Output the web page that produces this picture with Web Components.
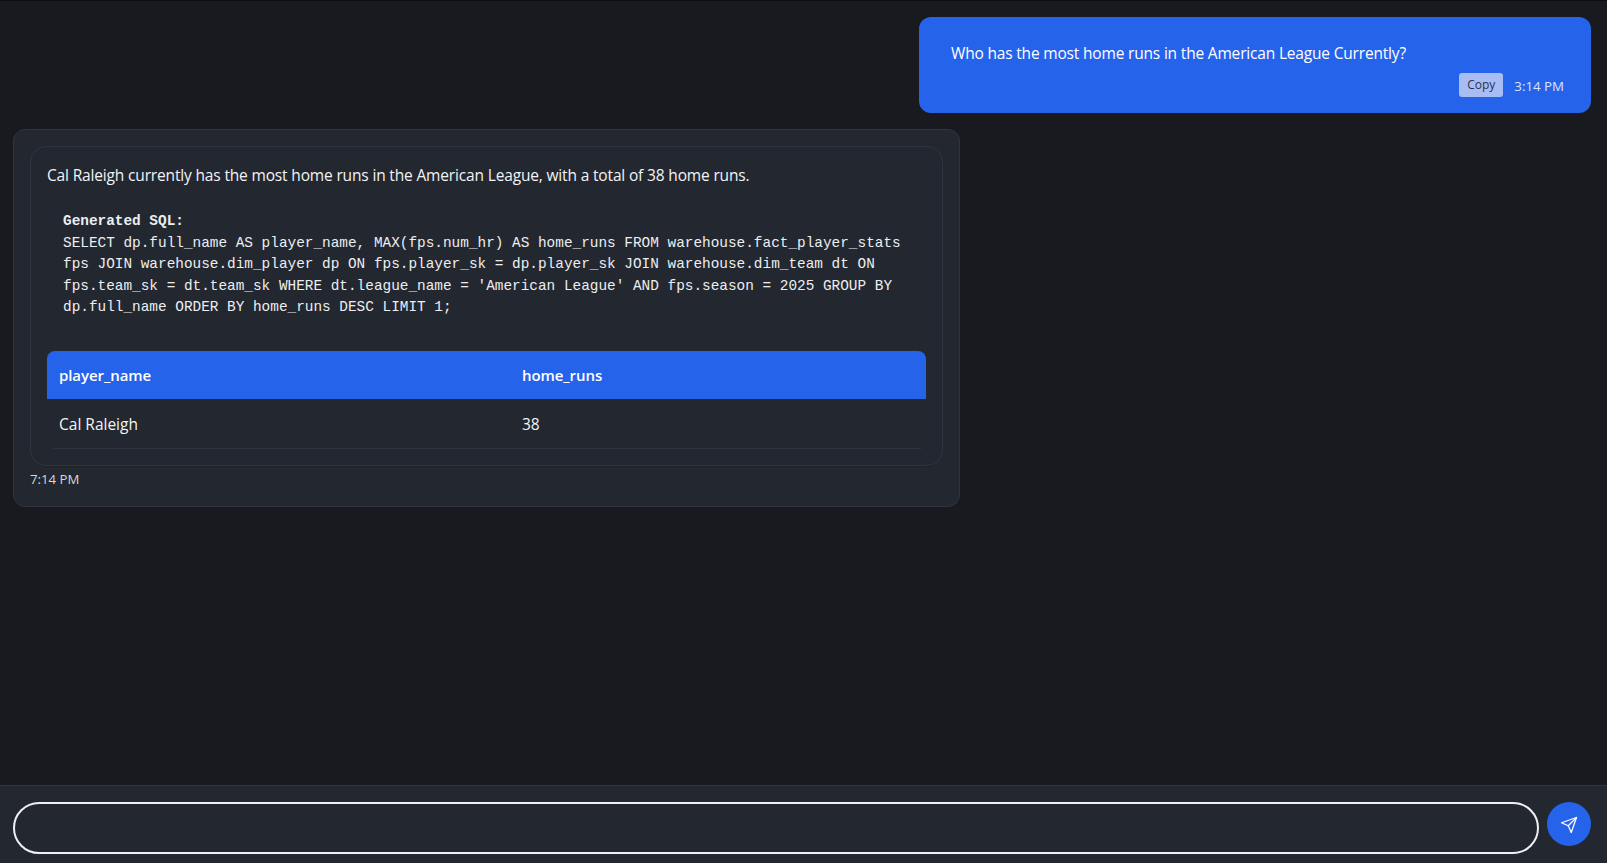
<!DOCTYPE html>
<html><head><meta charset="utf-8"><title>Chat</title>
<style>
html,body{margin:0;height:100%;background:#181a1f}
body{font-family:"Open Sans","Noto Sans",sans-serif;color:#f3f4f6;overflow:hidden}
</style></head><body>
<chat-app>
<user-bubble time="3:14 PM">Who has the most home runs in the American League Currently?</user-bubble>
<bot-card time="7:14 PM">
<div slot="answer">Cal Raleigh currently has the most home runs in the American League, with a total of 38 home runs.</div>
<sql-block>SELECT dp.full_name AS player_name, MAX(fps.num_hr) AS home_runs FROM warehouse.fact_player_stats fps JOIN warehouse.dim_player dp ON fps.player_sk = dp.player_sk JOIN warehouse.dim_team dt ON fps.team_sk = dt.team_sk WHERE dt.league_name = 'American League' AND fps.season = 2025 GROUP BY dp.full_name ORDER BY home_runs DESC LIMIT 1;</sql-block>
<result-table></result-table>
</bot-card>
<chat-input slot="footer"></chat-input>
</chat-app>
<script>
const def=(name,html,setup)=>customElements.define(name,class extends HTMLElement{
  constructor(){super();this.attachShadow({mode:'open'}).innerHTML=html;}
  connectedCallback(){setup&&setup(this,this.shadowRoot);}
});
const FONT='font-family:"Open Sans","Noto Sans",sans-serif;';
def('chat-app',`<style>
:host{display:flex;flex-direction:column;height:863px;box-sizing:border-box;border-top:1px solid #0b0c0f;background:#181a1f}
.log{flex:1;min-height:0;display:flex;flex-direction:column;align-items:stretch;gap:16px;padding:16px 16px 0 13px;overflow:hidden}
</style><div class="log"><slot></slot></div><slot name="footer"></slot>`);
def('user-bubble',`<style>
:host{display:block;align-self:flex-end;width:672px;height:96px;box-sizing:border-box;background:#2563eb;border-radius:12px;padding:26px 27px 0 32px;color:#fff;${FONT}font-size:15.5px;letter-spacing:-.18px;line-height:20px}
.meta{display:flex;justify-content:flex-end;align-items:center;gap:11px;margin-top:10px;font-size:13.3px;letter-spacing:0;color:#dbe5fb}
.meta span{position:relative;top:1px}
button{all:unset;font:inherit;font-size:12px;line-height:24px;height:24px;width:44px;text-align:center;background:#a9bdf5;border-radius:3px;color:#29334f}
</style><div><slot></slot></div><div class="meta"><button>Copy</button><span id="t"></span></div>`,
(el,s)=>{s.getElementById('t').textContent=el.getAttribute('time');});
def('bot-card',`<style>
:host{display:block;width:947px;box-sizing:border-box;background:#23272f;border:1px solid #2f343f;border-radius:12px;padding:16px 16px 17px;${FONT}font-size:15.5px;color:#f3f4f6}
.inner{border:1px solid #2f343f;border-radius:16px;padding:16px 16px 16px}
.answer{line-height:24px;height:24px;letter-spacing:-.16px}
.dots{height:0;border-top:1px dotted #191c21;margin:0 10px 0 15px}
.time{font-size:13.2px;line-height:20px;margin-top:2px;color:#d5d7dc}
</style><div class="inner"><div class="answer"><slot name="answer"></slot></div><slot></slot></div><div class="dots"></div><div class="time" id="t"></div>`,
(el,s)=>{s.getElementById('t').textContent=el.getAttribute('time');});
def('sql-block',`<style>
:host{display:block;margin:24px 0 32px;padding:0 16px;font-family:"Liberation Mono",monospace;font-size:14.4px;line-height:21.6px;color:#eceef1}
b{display:block}
</style><b>Generated SQL:</b><slot></slot>`);
def('result-table',`<style>
:host{display:block;font-size:15.5px}
.head,.row{display:grid;grid-template-columns:463px 1fr}
.head{height:48px;align-items:center;background:#2563eb;border-radius:8px 8px 0 0;color:#fff;font-weight:600;font-size:15px;letter-spacing:-.08px}
.row{height:49px;align-items:center;box-sizing:border-box;padding-top:1px}
span{padding-left:12px}
.rule{height:1px;background:#2f343f;margin:0 5px 0 6px}
</style><div class="head"><span>player_name</span><span>home_runs</span></div>
<div class="row"><span>Cal Raleigh</span><span>38</span></div><div class="rule"></div>`);
def('chat-input',`<style>
:host{display:flex;flex:none;height:78px;box-sizing:border-box;border-top:1px solid #2f343f;background:#23272f;padding:16px 16px 0 13px;gap:8px;align-items:flex-start}
input{flex:1;height:52px;box-sizing:border-box;background:transparent;border:2px solid #eef0f5;border-radius:26px;outline:none;color:#fff;padding:0 20px}
button{all:unset;flex:none;width:44px;height:44px;box-sizing:border-box;padding-top:2px;border-radius:50%;background:#2563eb;display:flex;align-items:center;justify-content:center}
svg{display:block}
</style><input type="text" aria-label="Message"><button aria-label="Send"><svg width="18" height="18" viewBox="0 0 24 24" fill="none" stroke="#fff" stroke-width="1.7" stroke-linecap="round" stroke-linejoin="round"><path d="M22 2 11 13"/><path d="M22 2 15 22 11 13 2 9 22 2z"/></svg></button>`);
</script></body></html>
